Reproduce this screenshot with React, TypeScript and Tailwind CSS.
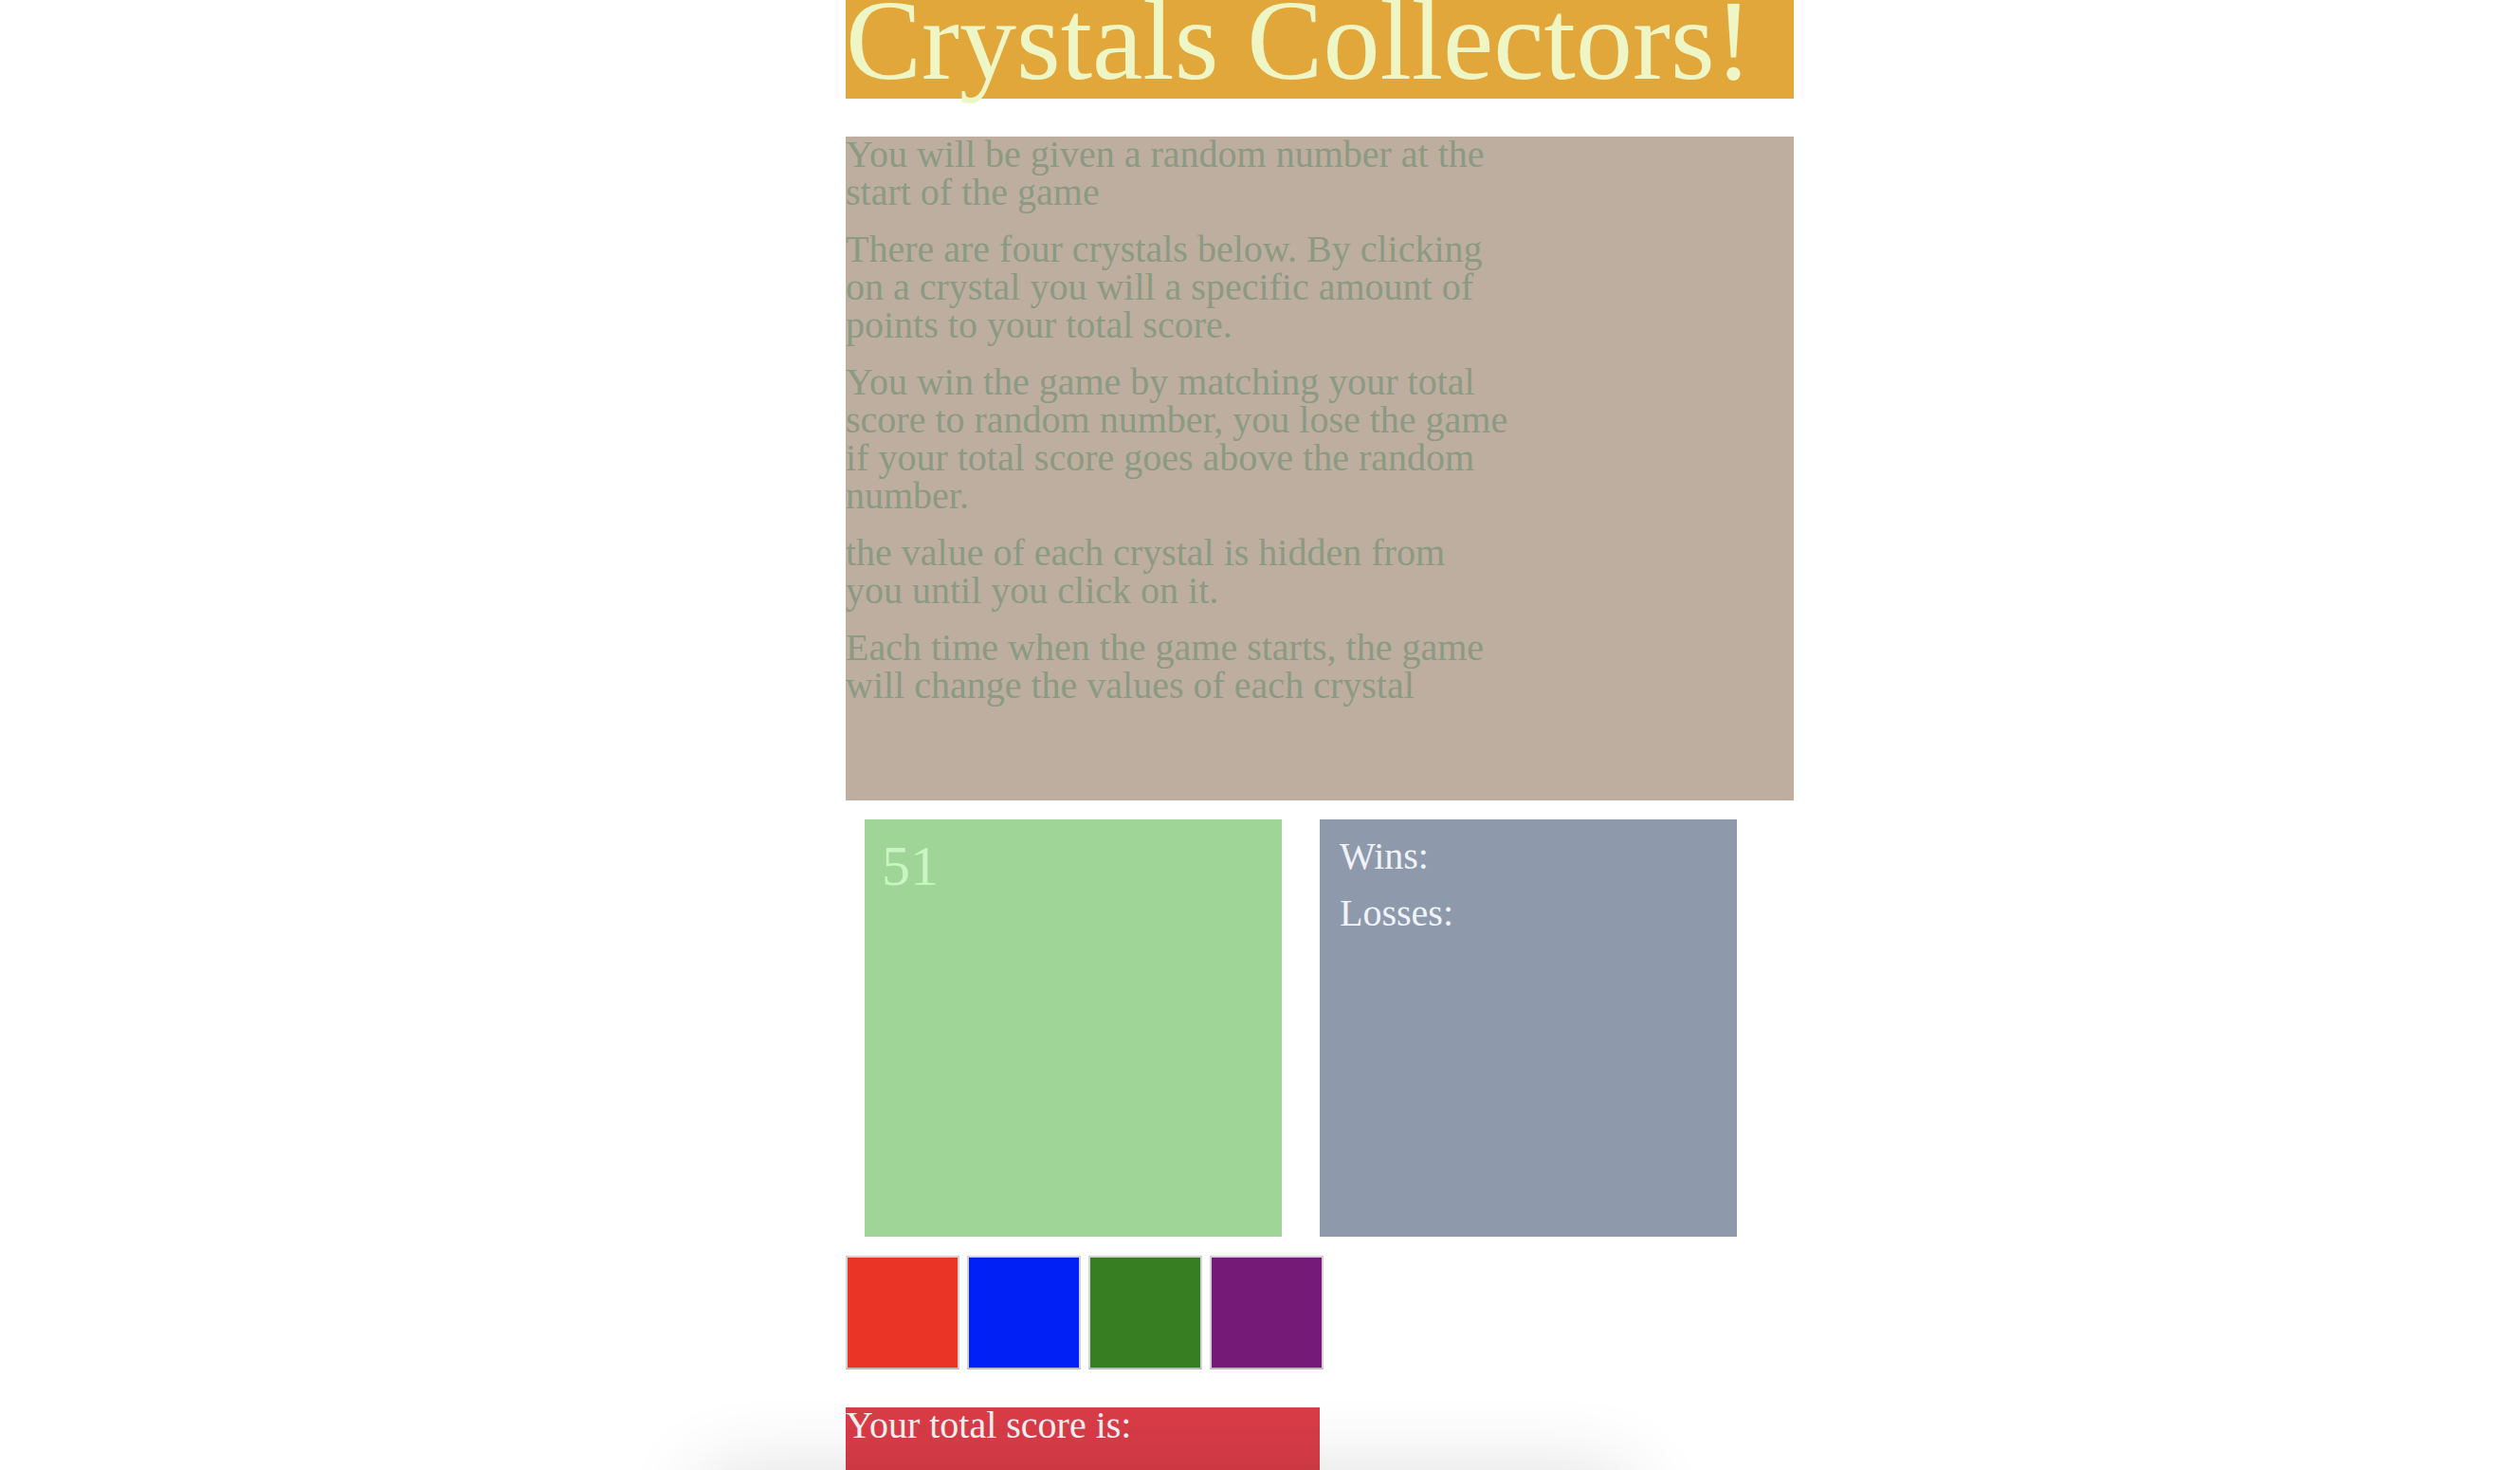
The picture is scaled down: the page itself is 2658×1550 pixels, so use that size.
import React from "react";

const paragraphs = [
  "You will be given a random number at the start of the game",
  "There are four crystals below. By clicking on a crystal you will a specific amount of points to your total score.",
  "You win the game by matching your total score to random number, you lose the game if your total score goes above the random number.",
  "the value of each crystal is hidden from you until you click on it.",
  "Each time when the game starts, the game will change the values of each crystal",
];

export default function App() {
  return (
    <div className="h-screen overflow-hidden bg-white font-['Liberation_Serif','Times_New_Roman',serif]">
      <div className="ml-[892px] w-[1000px]">
        <div className="h-[104px] bg-[#e2a73a] text-[120px] leading-[85px] text-[#eef6c6] whitespace-nowrap">
          Crystals Collectors!
        </div>

        <div className="mt-[40px] flex h-[700px] flex-col bg-[#beae9f] text-[40px] leading-[40px] text-[#8b9a82]">
          <div className="-mt-[1px] flex w-[701px] flex-col gap-[20px]">
            {paragraphs.map((p, i) => (
              <p key={i}>{p}</p>
            ))}
          </div>
        </div>

        <div className="mt-[20px] flex gap-[40px] pl-[20px]">
          <div className="h-[440px] w-[440px] bg-[#9fd596] pl-[18px] pt-[15px] text-[60px] leading-[69px] text-[#c8f5c2]">
            51
          </div>
          <div className="flex h-[440px] w-[440px] flex-col gap-[14px] bg-[#8e9aab] pl-[21px] pt-[16px] text-[40px] leading-[46px] text-[#f0f3f7]">
            <div>Wins:</div>
            <div>Losses:</div>
          </div>
        </div>

        <div className="mt-[20px] flex gap-[8px]">
          <button className="h-[120px] w-[120px] border-2 border-[#d3d3d3] border-b-[#b9b9b9] bg-[#ea3526]" />
          <button className="h-[120px] w-[120px] border-2 border-[#d3d3d3] border-b-[#b9b9b9] bg-[#0120f5]" />
          <button className="h-[120px] w-[120px] border-2 border-[#d3d3d3] border-b-[#b9b9b9] bg-[#377d22]" />
          <button className="h-[120px] w-[120px] border-2 border-[#d3d3d3] border-b-[#b9b9b9] bg-[#761a78]" />
        </div>

        <div className="mt-[40px] h-[76px] w-[500px] bg-[#d93c47] text-[40px] leading-[37px] text-[#eeeef0]">
          Your total score is:
        </div>
      </div>

      <div className="ml-[745px] h-[200px] w-[970px] bg-white shadow-[0_0_90px_0_rgba(0,0,0,0.16)]" />
    </div>
  );
}
